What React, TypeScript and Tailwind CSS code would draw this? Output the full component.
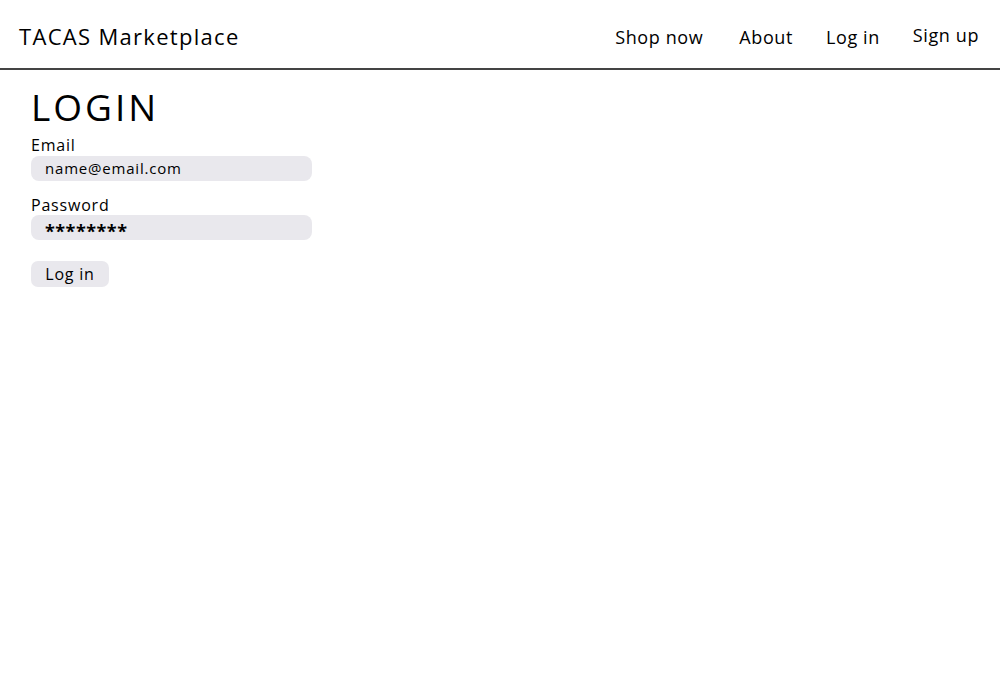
export default function App() {
  return (
    <div className="min-h-[686px] bg-white text-black" style={{ fontFamily: '"Open Sans", "Liberation Sans", sans-serif' }}>
      <header className="flex h-[70px] items-center justify-between border-b-2 border-[#444444] pl-[19px] pr-[21px]">
        <div className="text-[22px] leading-none tracking-[1.3px] pt-[4px]">TACAS Marketplace</div>
        <nav className="flex items-center text-[18px] leading-none tracking-[0.6px]">
          <a className="pt-[6px]">Shop now</a>
          <a className="ml-[36px] pt-[6px]">About</a>
          <a className="ml-[33px] pt-[6px]">Log in</a>
          <a className="ml-[33px] pt-[2px]">Sign up</a>
        </nav>
      </header>
      <main className="pl-[31px] pt-[18px]">
        <h1 className="text-[37px] leading-none tracking-[3px] font-normal">LOGIN</h1>
        <div className="mt-[12px] flex w-[281px] flex-col">
          <label className="text-[16px] leading-none tracking-[0.8px]">Email</label>
          <div className="mt-[3px] flex h-[25px] items-center rounded-[8px] bg-[#e9e8ed] pl-[14px] text-[15px] tracking-[0.8px]">
            name@email.com
          </div>
          <label className="mt-[16px] text-[16px] leading-none tracking-[0.8px]">Password</label>
          <div className="mt-[2px] flex h-[25px] items-center rounded-[8px] bg-[#e9e8ed] pl-[14px] pt-[7px] text-[18px] font-bold tracking-[0.5px]">
            ********
          </div>
          <button className="mt-[21px] h-[26px] w-[78px] rounded-[7px] bg-[#e9e8ed] text-[16px] leading-none tracking-[0.8px]">Log in</button>
        </div>
      </main>
    </div>
  );
}
